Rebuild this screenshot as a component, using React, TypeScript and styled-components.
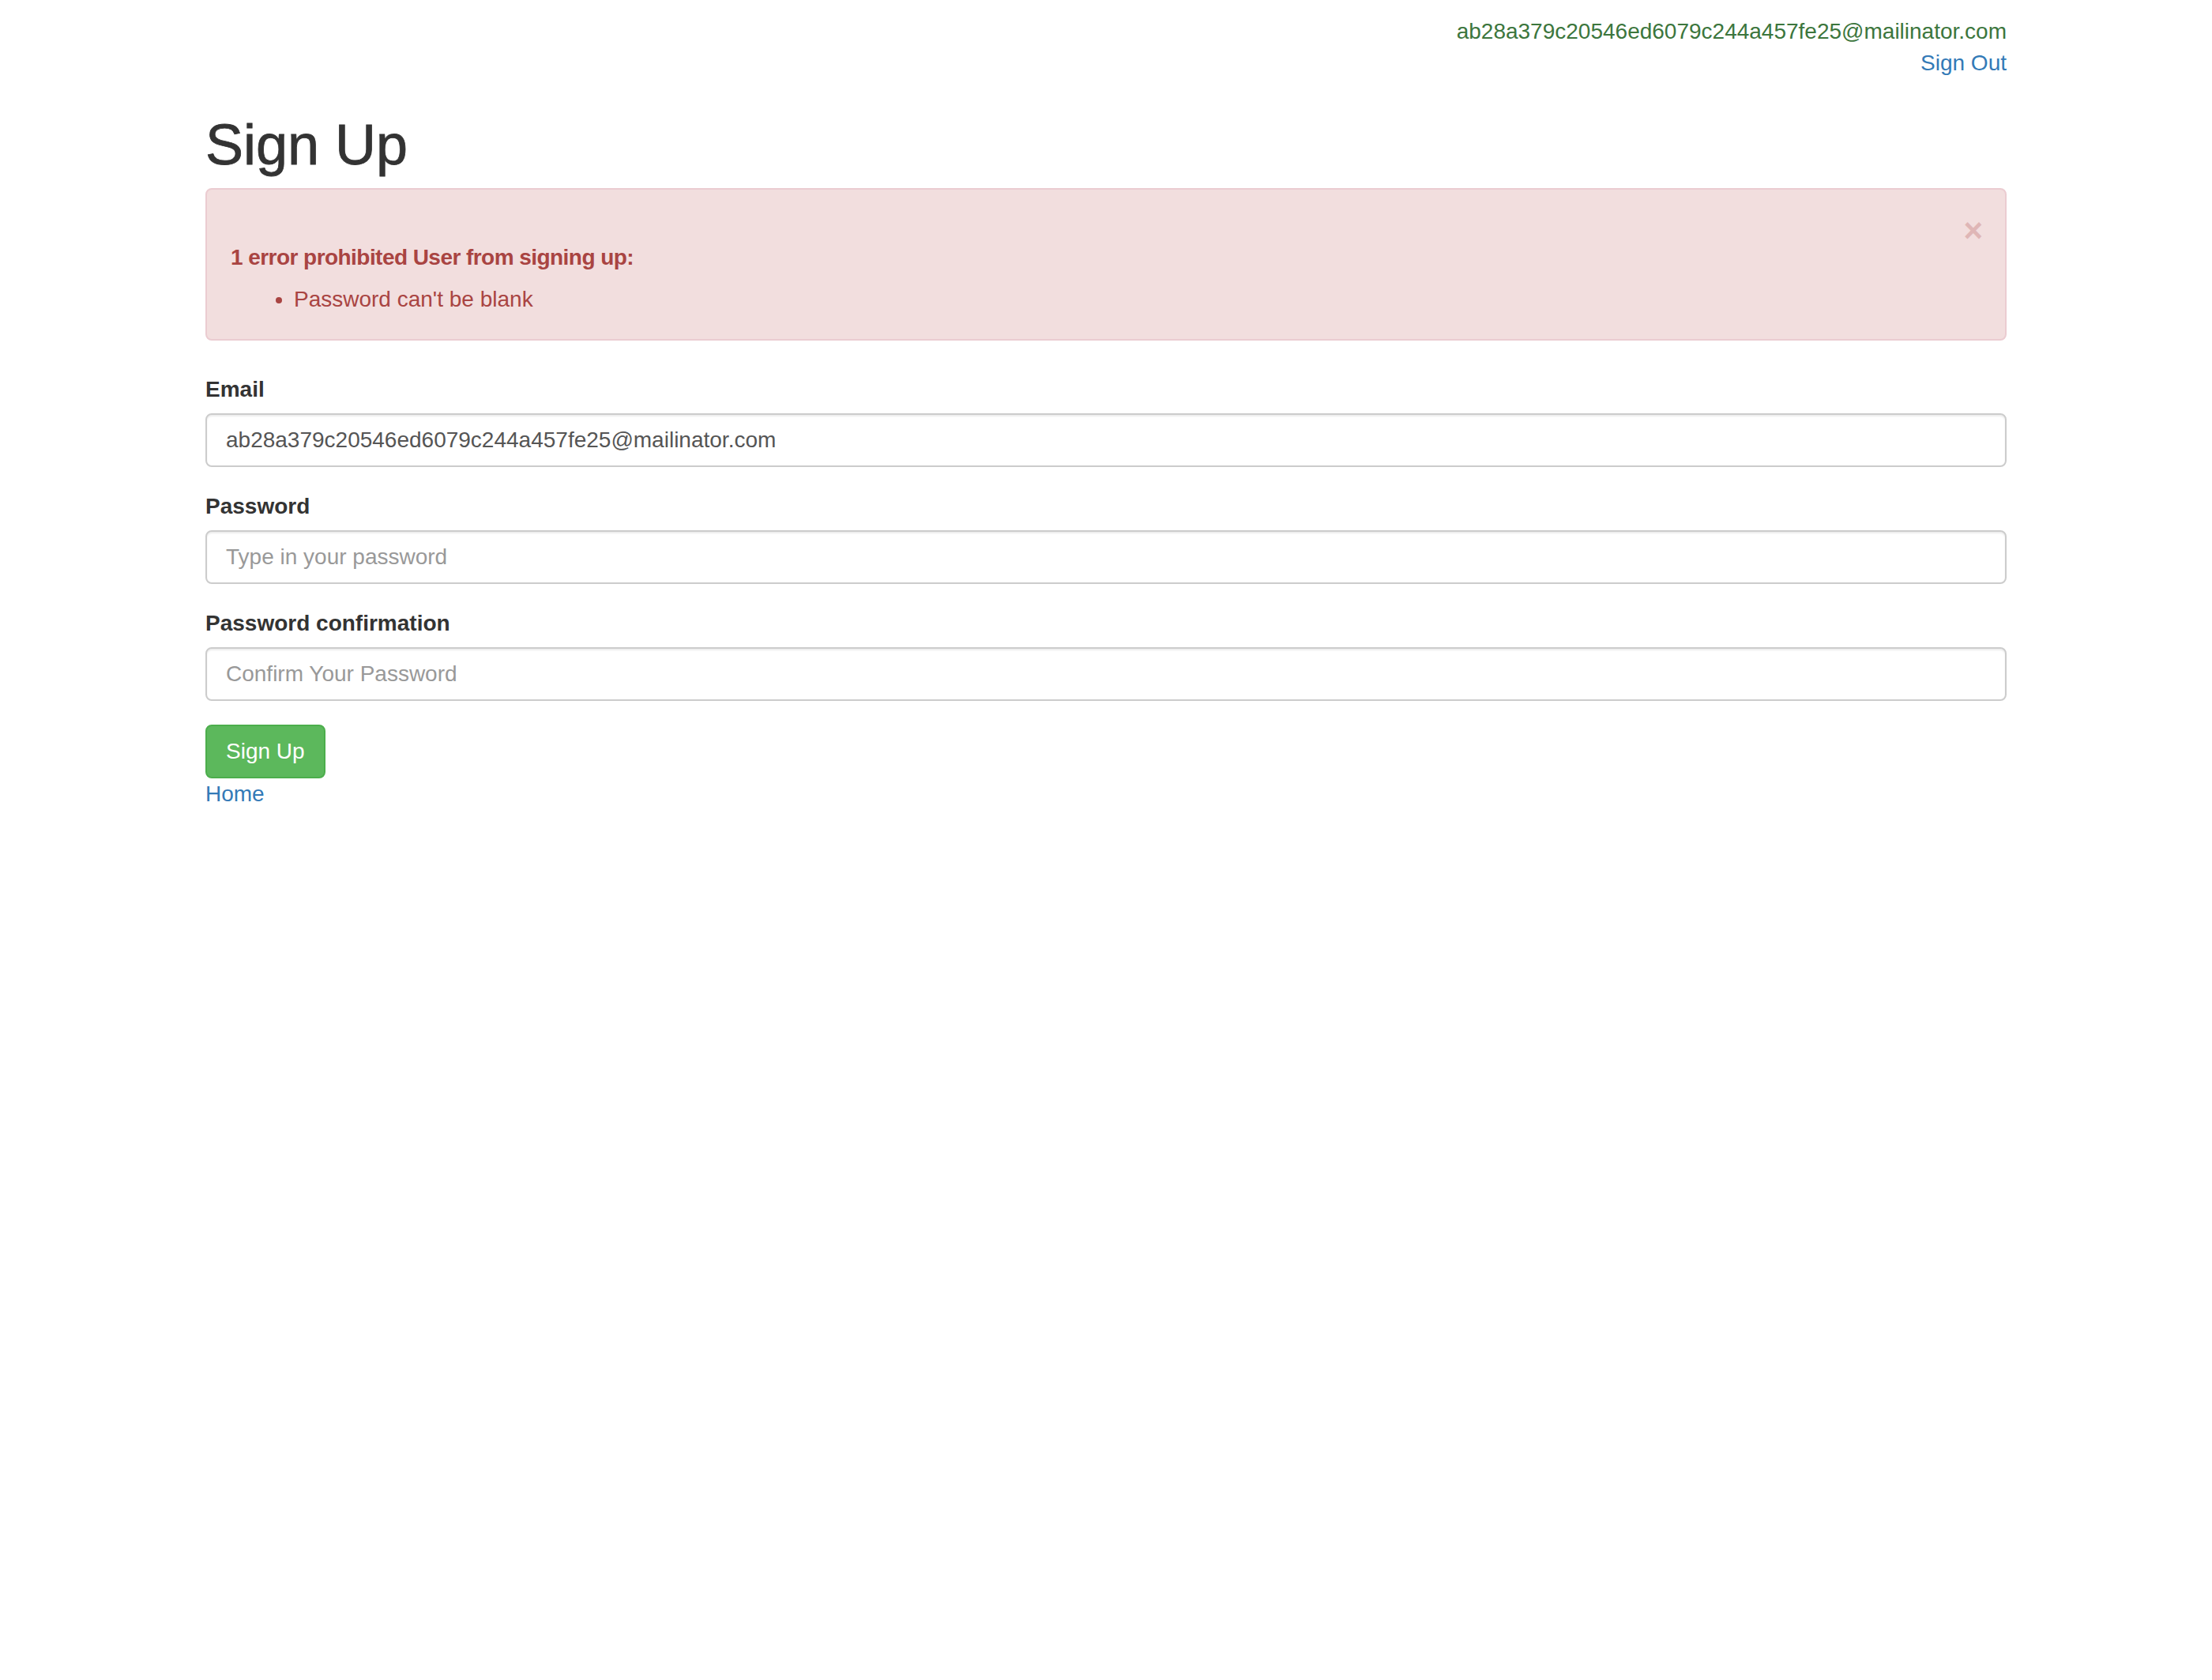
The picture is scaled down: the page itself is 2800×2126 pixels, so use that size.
import React from "react";
import styled, { createGlobalStyle } from "styled-components";

const GlobalStyle = createGlobalStyle`
  *, *::before, *::after { box-sizing: border-box; }
  html, body { margin: 0; padding: 0; background: #fff; }
  body {
    font-family: "Liberation Sans", Arial, Helvetica, sans-serif;
    font-size: 28px;
    line-height: 40px;
    color: #333;
  }
`;

const Container = styled.div`
  width: 2340px;
  margin: 0 auto;
  padding: 20px 30px 0;
`;

const UserBar = styled.div`
  display: flex;
  flex-direction: column;
  align-items: flex-end;
`;

const UserEmail = styled.span`
  color: #3c763d;
`;

const Link = styled.a`
  color: #337ab7;
  text-decoration: none;
  cursor: pointer;
`;

const Title = styled.h1`
  margin: 44px 0 15px;
  font-size: 72px;
  font-weight: 500;
  line-height: 79px;
  color: #333;
  -webkit-text-stroke: 0.8px #333;
`;

const Alert = styled.div`
  position: relative;
  margin-bottom: 42px;
  padding: 30px 70px 30px 30px;
  border: 2px solid #ebccd1;
  border-radius: 8px;
  background: #f2dede;
  color: #a94442;
`;

const CloseButton = styled.button`
  position: absolute;
  top: 31px;
  right: 28px;
  padding: 0;
  border: 0;
  background: transparent;
  font-family: "Liberation Sans", Arial, sans-serif;
  font-size: 42px;
  font-weight: 700;
  line-height: 1;
  color: #a94442;
  opacity: 0.25;
  cursor: pointer;
`;

const AlertHeading = styled.div`
  margin-top: 36px;
  font-weight: 700;
  letter-spacing: -0.55px;
`;

const ErrorList = styled.ul`
  margin: 13px 0 0;
  padding-left: 80px;
`;

const Form = styled.form`
  display: flex;
  flex-direction: column;
`;

const FormGroup = styled.div`
  display: flex;
  flex-direction: column;
  margin-bottom: 30px;
`;

const Label = styled.label`
  margin-bottom: 10px;
  font-weight: 700;
`;

const Input = styled.input`
  display: block;
  width: 100%;
  height: 68px;
  padding: 12px 24px;
  border: 2px solid #ccc;
  border-radius: 8px;
  background: #fff;
  box-shadow: inset 0 2px 2px rgba(0, 0, 0, 0.075);
  font-family: "Liberation Sans", Arial, sans-serif;
  font-size: 28px;
  line-height: 40px;
  color: #555;
  outline: none;
  &::placeholder { color: #999; opacity: 1; }
`;

const SubmitButton = styled.button`
  align-self: flex-start;
  padding: 12px 24px;
  border: 2px solid #4cae4c;
  border-radius: 8px;
  background: #5cb85c;
  font-family: "Liberation Sans", Arial, sans-serif;
  font-size: 28px;
  line-height: 40px;
  color: #fff;
  cursor: pointer;
`;

const Footer = styled.div`
  display: block;
`;

export default function App() {
  const email = "ab28a379c20546ed6079c244a457fe25@mailinator.com";
  return (
    <>
      <GlobalStyle />
      <Container>
        <UserBar>
          <UserEmail>{email}</UserEmail>
          <Link href="#">Sign Out</Link>
        </UserBar>
        <Title>Sign Up</Title>
        <Alert>
          <CloseButton type="button" aria-label="Close">×</CloseButton>
          <AlertHeading>1 error prohibited User from signing up:</AlertHeading>
          <ErrorList>
            <li>Password can't be blank</li>
          </ErrorList>
        </Alert>
        <Form onSubmit={(e) => e.preventDefault()}>
          <FormGroup>
            <Label htmlFor="email">Email</Label>
            <Input id="email" type="email" defaultValue={email} />
          </FormGroup>
          <FormGroup>
            <Label htmlFor="password">Password</Label>
            <Input id="password" type="password" placeholder="Type in your password" />
          </FormGroup>
          <FormGroup>
            <Label htmlFor="password_confirmation">Password confirmation</Label>
            <Input id="password_confirmation" type="password" placeholder="Confirm Your Password" />
          </FormGroup>
          <SubmitButton type="submit">Sign Up</SubmitButton>
        </Form>
        <Footer>
          <Link href="#">Home</Link>
        </Footer>
      </Container>
    </>
  );
}
